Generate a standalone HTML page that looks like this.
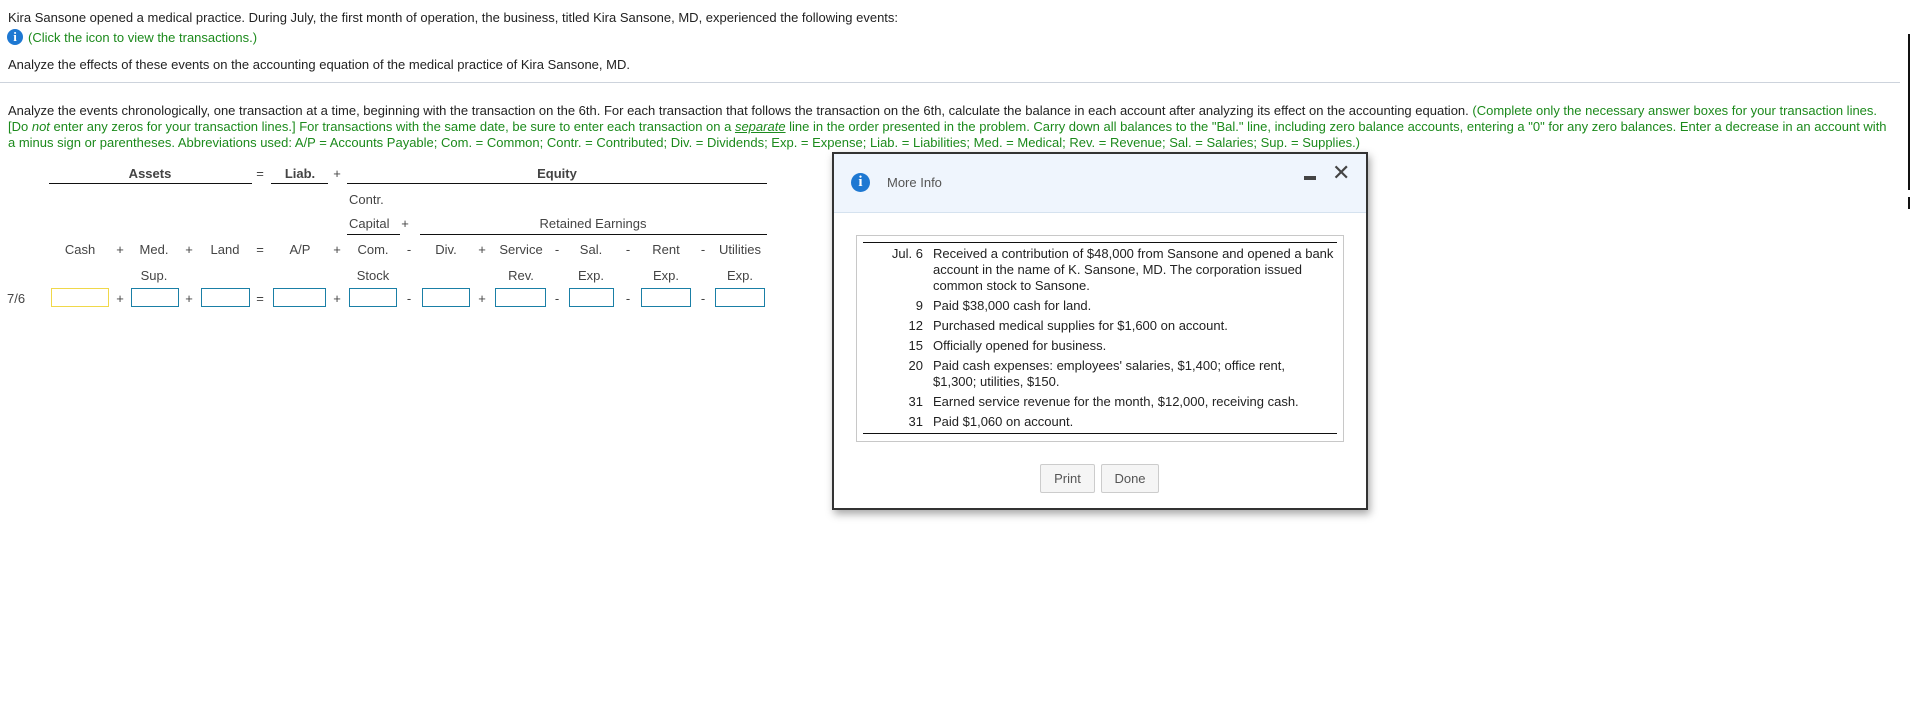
<!DOCTYPE html>
<html><head><meta charset="utf-8"><style>
*{margin:0;padding:0;box-sizing:border-box}
body{width:1911px;height:718px;background:#fff;font-family:"Liberation Sans",Arial,sans-serif;font-size:13px;color:#222;position:relative;overflow:hidden}
.a{position:absolute;white-space:nowrap;line-height:15px}
.g{color:#1c8a1c}
.c{transform:translateX(-50%)}
.ln{position:absolute;height:1px;background:#111}
.in{position:absolute;height:19px;border:1px solid #1a7fa6;top:288px}
.info{position:absolute;border-radius:50%;background:#1e78d2;color:#fff;font-family:"Liberation Serif",serif;font-weight:bold;text-align:center}
</style></head><body>
<div class="a" style="left:8px;top:10px">Kira Sansone opened a medical practice. During July, the first month of operation, the business, titled Kira Sansone, MD, experienced the following events:</div>
<div class="info" style="left:7px;top:29px;width:16px;height:16px;font-size:13px;line-height:16px">i</div>
<div class="a g" style="left:28px;top:30px">(Click the icon to view the transactions.)</div>
<div class="a" style="left:8px;top:57px">Analyze the effects of these events on the accounting equation of the medical practice of Kira Sansone, MD.</div>
<div style="position:absolute;left:0;top:82px;width:1900px;height:1px;background:#cdd3dc"></div>
<div class="a" style="left:8px;top:103px">Analyze the events chronologically, one transaction at a time, beginning with the transaction on the 6th. For each transaction that follows the transaction on the 6th, calculate the balance in each account after analyzing its effect on the accounting equation. <span class="g">(Complete only the necessary answer boxes for your transaction lines.</span></div>
<div class="a g" style="left:8px;top:119px">[Do <i>not</i> enter any zeros for your transaction lines.] For transactions with the same date, be sure to enter each transaction on a <i><u>separate</u></i> line in the order presented in the problem. Carry down all balances to the "Bal." line, including zero balance accounts, entering a "0" for any zero balances. Enter a decrease in an account with</div>
<div class="a g" style="left:8px;top:135px">a minus sign or parentheses. Abbreviations used: A/P = Accounts Payable; Com. = Common; Contr. = Contributed; Div. = Dividends; Exp. = Expense; Liab. = Liabilities; Med. = Medical; Rev. = Revenue; Sal. = Salaries; Sup. = Supplies.)</div>
<div style="position:absolute;left:1908px;top:34px;width:2px;height:156px;background:#111"></div>
<div style="position:absolute;left:1908px;top:197px;width:2px;height:12px;background:#111"></div>

<div class="a c" style="left:150px;top:166px;font-weight:bold;color:#444">Assets</div>
<div class="ln" style="left:49px;width:203px;top:183px"></div>
<div class="a c" style="left:260px;top:166px;color:#444">=</div>
<div class="a c" style="left:300px;top:166px;font-weight:bold;color:#444">Liab.</div>
<div class="ln" style="left:271px;width:57px;top:183px"></div>
<div class="a c" style="left:337px;top:166px;color:#444">+</div>
<div class="a c" style="left:557px;top:166px;font-weight:bold;color:#444">Equity</div>
<div class="ln" style="left:347px;width:420px;top:183px"></div>
<div class="a" style="left:349px;top:192px;color:#444">Contr.</div>
<div class="a" style="left:349px;top:216px;color:#444">Capital</div>
<div class="ln" style="left:347px;width:53px;top:234px"></div>
<div class="a c" style="left:405px;top:216px;color:#444">+</div>
<div class="a c" style="left:593px;top:216px;color:#444">Retained Earnings</div>
<div class="ln" style="left:420px;width:347px;top:234px"></div>

<div class="a c" style="left:80px;top:242px;color:#444">Cash</div>
<div class="a c" style="left:120px;top:242px;color:#444">+</div>
<div class="a c" style="left:154px;top:242px;color:#444">Med.</div>
<div class="a c" style="left:189px;top:242px;color:#444">+</div>
<div class="a c" style="left:225px;top:242px;color:#444">Land</div>
<div class="a c" style="left:260px;top:242px;color:#444">=</div>
<div class="a c" style="left:300px;top:242px;color:#444">A/P</div>
<div class="a c" style="left:337px;top:242px;color:#444">+</div>
<div class="a c" style="left:373px;top:242px;color:#444">Com.</div>
<div class="a c" style="left:409px;top:242px;color:#444">-</div>
<div class="a c" style="left:446px;top:242px;color:#444">Div.</div>
<div class="a c" style="left:482px;top:242px;color:#444">+</div>
<div class="a c" style="left:521px;top:242px;color:#444">Service</div>
<div class="a c" style="left:557px;top:242px;color:#444">-</div>
<div class="a c" style="left:591px;top:242px;color:#444">Sal.</div>
<div class="a c" style="left:628px;top:242px;color:#444">-</div>
<div class="a c" style="left:666px;top:242px;color:#444">Rent</div>
<div class="a c" style="left:703px;top:242px;color:#444">-</div>
<div class="a c" style="left:740px;top:242px;color:#444">Utilities</div>

<div class="a c" style="left:154px;top:268px;color:#444">Sup.</div>
<div class="a c" style="left:373px;top:268px;color:#444">Stock</div>
<div class="a c" style="left:521px;top:268px;color:#444">Rev.</div>
<div class="a c" style="left:591px;top:268px;color:#444">Exp.</div>
<div class="a c" style="left:666px;top:268px;color:#444">Exp.</div>
<div class="a c" style="left:740px;top:268px;color:#444">Exp.</div>

<div class="a" style="left:7px;top:291px;color:#444">7/6</div>
<div class="in" style="left:51px;width:58px;border-color:#f0d84a"></div>
<div class="a c" style="left:120px;top:291px;color:#444">+</div>
<div class="in" style="left:131px;width:48px"></div>
<div class="a c" style="left:189px;top:291px;color:#444">+</div>
<div class="in" style="left:201px;width:49px"></div>
<div class="a c" style="left:260px;top:291px;color:#444">=</div>
<div class="in" style="left:273px;width:53px"></div>
<div class="a c" style="left:337px;top:291px;color:#444">+</div>
<div class="in" style="left:349px;width:48px"></div>
<div class="a c" style="left:409px;top:291px;color:#444">-</div>
<div class="in" style="left:422px;width:48px"></div>
<div class="a c" style="left:482px;top:291px;color:#444">+</div>
<div class="in" style="left:495px;width:51px"></div>
<div class="a c" style="left:557px;top:291px;color:#444">-</div>
<div class="in" style="left:569px;width:45px"></div>
<div class="a c" style="left:628px;top:291px;color:#444">-</div>
<div class="in" style="left:641px;width:50px"></div>
<div class="a c" style="left:703px;top:291px;color:#444">-</div>
<div class="in" style="left:715px;width:50px"></div>

<div style="position:absolute;left:832px;top:152px;width:536px;height:358px;border:2px solid #333;background:#fff;box-shadow:2px 4px 8px rgba(0,0,0,.35)">
  <div style="position:absolute;left:0;top:0;right:0;height:59px;background:#eff5fd;border-bottom:1px solid #d5e2ef"></div>
</div>
<div class="info" style="left:851px;top:173px;width:19px;height:19px;font-size:15px;line-height:19px">i</div>
<div class="a" style="left:887px;top:175px;color:#555;font-size:13px">More Info</div>
<div style="position:absolute;left:1304px;top:176px;width:12px;height:4px;background:#444"></div>
<div class="a" style="left:1332px;top:160px;color:#444;font-size:22px;line-height:26px">✕</div>
<div style="position:absolute;left:856px;top:235px;width:488px;height:207px;border:1px solid #c8c8c8"></div>
<div class="ln" style="left:863px;width:474px;top:242px"></div>
<div class="ln" style="left:863px;width:474px;top:433px"></div>
<div class="a" style="left:933px;top:246px;line-height:16px">Received a contribution of $48,000 from Sansone and opened a bank<br>account in the name of K. Sansone, MD. The corporation issued<br>common stock to Sansone.</div>
<div class="a" style="right:988px;top:246px">Jul. 6</div>
<div class="a" style="right:988px;top:298px">9</div><div class="a" style="left:933px;top:298px">Paid $38,000 cash for land.</div>
<div class="a" style="right:988px;top:318px">12</div><div class="a" style="left:933px;top:318px">Purchased medical supplies for $1,600 on account.</div>
<div class="a" style="right:988px;top:338px">15</div><div class="a" style="left:933px;top:338px">Officially opened for business.</div>
<div class="a" style="right:988px;top:358px">20</div><div class="a" style="left:933px;top:358px;line-height:16px">Paid cash expenses: employees' salaries, $1,400; office rent,<br>$1,300; utilities, $150.</div>
<div class="a" style="right:988px;top:394px">31</div><div class="a" style="left:933px;top:394px">Earned service revenue for the month, $12,000, receiving cash.</div>
<div class="a" style="right:988px;top:414px">31</div><div class="a" style="left:933px;top:414px">Paid $1,060 on account.</div>
<div style="position:absolute;left:1040px;top:464px;width:55px;height:29px;border:1px solid #ccc;border-radius:2px;background:#f5f5f5;color:#555;text-align:center;line-height:27px;font-size:13px">Print</div>
<div style="position:absolute;left:1101px;top:464px;width:58px;height:29px;border:1px solid #ccc;border-radius:2px;background:#f5f5f5;color:#555;text-align:center;line-height:27px;font-size:13px">Done</div>
</body></html>
